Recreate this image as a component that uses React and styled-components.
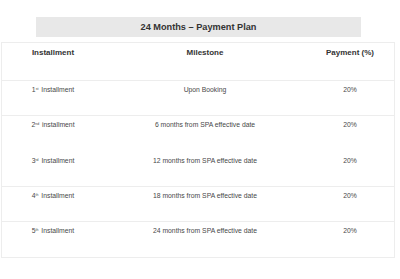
import React from "react";
import styled, { createGlobalStyle } from "styled-components";

const Global = createGlobalStyle`
  html, body { margin: 0; padding: 0; background: #fff; }
  body { font-family: "Liberation Sans", Arial, sans-serif; }
`;

const Page = styled.div`
  width: 400px;
  box-sizing: border-box;
  padding: 17px 5px 0 1px;
`;

const TitleBar = styled.div`
  margin: 0 34px 0 35px;
  height: 20px;
  background: #e8e8e8;
  display: flex;
  align-items: center;
  justify-content: center;
  font-weight: bold;
  font-size: 9.2px;
  color: #333;
`;

const Table = styled.div`
  margin-top: 5px;
  border: 1px solid #ededed;
  display: flex;
  flex-direction: column;
`;

const Row = styled.div`
  display: grid;
  grid-template-columns: 102px 202px 88px;
  box-sizing: border-box;
  height: ${(p) => (p.$header ? "38px" : "35.3px")};
  padding-top: 5px;
  border-bottom: 1px solid ${(p) => (p.$noBorder ? "transparent" : "#ededed")};
  &:last-child { border-bottom: none; }
`;

const Cell = styled.div`
  text-align: center;
  font-size: ${(p) => (p.$header ? "8px" : "6.8px")};
  font-weight: ${(p) => (p.$header ? "bold" : "normal")};
  color: ${(p) => (p.$header ? "#333" : "#484848")};
  line-height: 1.15;
  white-space: nowrap;
`;

const Sup = styled.sup`
  font-size: 3.5px;
  vertical-align: 2px;
  margin-right: 1px;
`;

const rows = [
  { n: "1", s: "st", label: "Installment", m: "Upon Booking" },
  { n: "2", s: "nd", label: "installment", m: "6 months from SPA effective date", noBorder: true },
  { n: "3", s: "rd", label: "Installment", m: "12 months from SPA effective date" },
  { n: "4", s: "th", label: "Installment", m: "18 months from SPA effective date" },
  { n: "5", s: "th", label: "Installment", m: "24 months from SPA effective date" },
];

export default function App() {
  return (
    <>
      <Global />
      <Page>
        <TitleBar>24 Months – Payment Plan</TitleBar>
        <Table>
          <Row $header>
            <Cell $header>Installment</Cell>
            <Cell $header>Milestone</Cell>
            <Cell $header>Payment (%)</Cell>
          </Row>
          {rows.map((r) => (
            <Row key={r.n} $noBorder={r.noBorder}>
              <Cell>
                {r.n}
                <Sup>{r.s}</Sup> {r.label}
              </Cell>
              <Cell>{r.m}</Cell>
              <Cell>20%</Cell>
            </Row>
          ))}
        </Table>
      </Page>
    </>
  );
}
